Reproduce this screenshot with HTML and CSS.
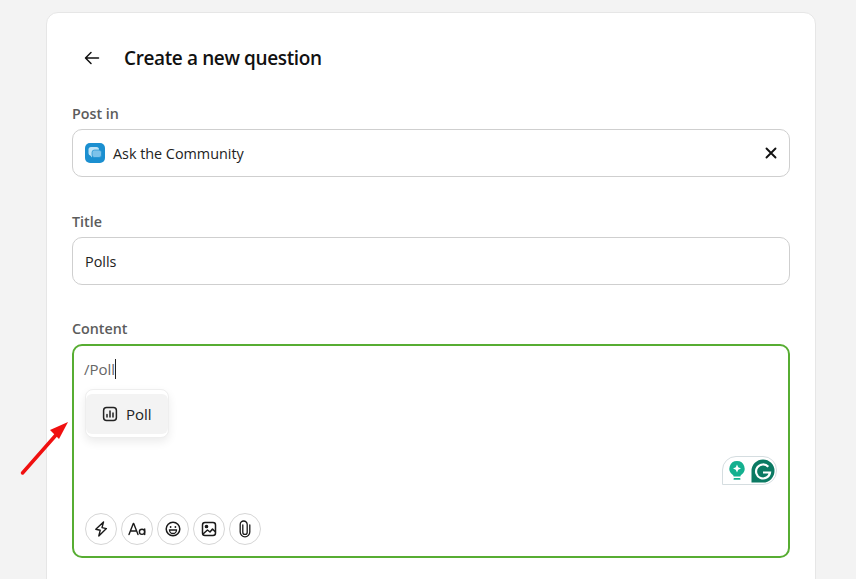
FILE: index.html
```html
<!DOCTYPE html>
<html lang="en">
<head>
<meta charset="utf-8">
<title>Create a new question</title>
<link rel="stylesheet" href="styles.css">
</head>
<body>
<main class="card">
  <header class="head">
    <button class="back" aria-label="Back">
      <svg width="16" height="14" viewBox="0 0 16 14" fill="none" stroke="#111" stroke-width="1.5" stroke-linecap="round" stroke-linejoin="round"><path d="M14.5 7H1.8M7 1.5 1.5 7 7 12.5"/></svg>
    </button>
    <h1 class="title">Create a new question</h1>
  </header>

  <section class="field field-post">
    <div class="label">Post in</div>
    <div class="input">
      <svg class="space-icon" width="20" height="20" viewBox="0 0 20 20">
        <rect width="20" height="20" rx="5" fill="#1b8fd0"/>
        <rect x="3.5" y="4" width="10.5" height="8.5" rx="2.5" fill="#bfe3f6"/>
        <path d="M5 12h2v2.5z" fill="#bfe3f6"/>
        <rect x="7" y="7" width="9.5" height="7.5" rx="2.5" fill="#7cc2ea" stroke="#1b8fd0" stroke-width=".7"/>
      </svg>
      <span class="value">Ask the Community</span>
      <svg class="clear" width="12" height="12" viewBox="0 0 12 12" fill="none" stroke="#111" stroke-width="1.9" stroke-linecap="round"><path d="M1.5 1.500l9 9M10.500 1.500l-9 9"/></svg>
    </div>
  </section>

  <section class="field field-title">
    <div class="label">Title</div>
    <div class="input"><span class="value">Polls</span></div>
  </section>

  <section class="field field-content">
    <div class="label">Content</div>
    <div class="editor">
      <div class="typed">/Poll<span class="caret"></span></div>
      <div class="menu">
        <div class="menu-item">
          <svg width="16" height="16" viewBox="0 0 16 16" fill="none" stroke="#222" stroke-width="1.5" stroke-linecap="round"><rect x="1.600" y="1.600" width="12.800" height="12.800" rx="3"/><path d="M5 11V8.500M8 11V5M11 11V7"/></svg>
          <span>Poll</span>
        </div>
      </div>
      <div class="grammarly">
        <svg width="18" height="21" viewBox="0 0 18 21"><path d="M9 1a7.600 7.600 0 0 0-4.400 13.800c.7.500 1 1 1 1.700h6.800c0-.7.300-1.200 1-1.700A7.600 7.600 0 0 0 9 1z" fill="#14b08f"/><path d="M9 4.500l1.200 2.800 2.800 1.200-2.800 1.200L9 12.500l-1.200-2.800L5 8.500l2.800-1.200z" fill="#fff"/><rect x="5.500" y="18" width="7" height="1.800" rx=".9" fill="#14b08f"/></svg>
        <svg width="24" height="24" viewBox="0 0 24 24"><path d="M12 .5a11.500 11.500 0 0 1 0 23H.5V12A11.500 11.500 0 0 1 12 .5z" fill="#0b7a63"/><path d="M17.300 7.800A7 7 0 1 0 19 13.500h-7" fill="none" stroke="#fff" stroke-width="2.200"/></svg>
      </div>
      <div class="tools">
        <button class="tool" aria-label="Quick actions"><svg width="16" height="16" viewBox="0 0 16 16" fill="none" stroke="#1a1a1a" stroke-width="1.400" stroke-linejoin="round"><path d="M10.500 1 2.800 8.300l4.400 1L5.800 15l7.600-7.400-4.400-1z"/></svg></button>
        <button class="tool" aria-label="Text format"><svg width="18" height="14" viewBox="0 0 18 14" fill="none" stroke="#1a1a1a" stroke-width="1.400" stroke-linecap="round" stroke-linejoin="round"><path d="M1 12.500 5.300 1.500h.4L10 12.500M2.500 9h6"/><circle cx="14" cy="9.800" r="2.600"/><path d="M16.700 7v5.500"/></svg></button>
        <button class="tool" aria-label="Emoji"><svg width="16" height="16" viewBox="0 0 16 16" fill="none" stroke="#1a1a1a" stroke-width="1.500"><circle cx="8" cy="8" r="6.800"/><circle cx="5.600" cy="6" r=".9" fill="#1a1a1a" stroke="none"/><circle cx="10.400" cy="6" r=".9" fill="#1a1a1a" stroke="none"/><path d="M4.500 9h7a3.500 3.500 0 0 1-7 0z" stroke-width="1.300"/></svg></button>
        <button class="tool" aria-label="Image"><svg width="16" height="16" viewBox="0 0 16 16" fill="none" stroke="#1a1a1a" stroke-width="1.500" stroke-linejoin="round"><rect x="1.500" y="1.500" width="13" height="13" rx="2.500"/><circle cx="5.500" cy="5.500" r="1.100" fill="#1a1a1a"/><path d="M2 13l4.500-4 2.500 2 2.500-3 3 3"/></svg></button>
        <button class="tool" aria-label="Attach"><svg width="14" height="18" viewBox="0 0 14 18" fill="none" stroke="#1a1a1a" stroke-width="1.300" stroke-linecap="round"><path d="M4.800 5v7.200a2.200 2.200 0 0 0 4.400 0V4.500a3.500 3.500 0 0 0-7 0V12a4.800 4.800 0 0 0 9.600 0V5"/></svg></button>
      </div>
    </div>
  </section>
</main>
<svg class="annot" width="50" height="56" viewBox="0 0 50 56"><path d="M2.500 53 36 15" stroke="#f01010" stroke-width="3.500" stroke-linecap="round"/><path d="M48 2 30 10l9 9z" fill="#f01010"/></svg>
</body>
</html>
```
FILE: styles.css
```css
html, body {
  margin: 0;
  height: 579px;
  overflow: hidden;
  background: #f3f3f3;
}
body {
  font-family: "Open Sans", "Noto Sans", sans-serif;
  color: #1a1a1a;
  padding: 12px 0 0 46px;
  box-sizing: border-box;
  position: relative;
}
.card {
  width: 770px;
  box-sizing: border-box;
  background: #fff;
  border: 1px solid #e6e6e6;
  border-radius: 12px;
  padding: 24px 25px 40px 25px;
}
.head {
  display: flex;
  align-items: center;
  height: 42px;
  gap: 24px;
  padding-left: 12px;
}
.back {
  border: 0;
  background: none;
  padding: 0;
  width: 16px;
  height: 14px;
  display: flex;
}
.title {
  margin: 0;
  font-size: 19px;
  font-weight: 600;
  color: #111;
  letter-spacing: -0.38px;
}
.field-post { margin-top: 25px; }
.field-title { margin-top: 35px; }
.field-content { margin-top: 34px; }
.label {
  font-size: 14.300px;
  font-weight: 600;
  line-height: 20px;
  color: #5c5c5c;
  margin-bottom: 5px;
}
.input {
  height: 48px;
  box-sizing: border-box;
  border: 1px solid #cfcfcf;
  border-radius: 10px;
  display: flex;
  align-items: center;
  padding: 0 12px;
  gap: 8px;
}
.value { font-size: 14.400px; color: #222; flex: 1; letter-spacing: -0.02px; }
.editor {
  position: relative;
  height: 214px;
  box-sizing: border-box;
  border: 2px solid #57ad32;
  border-radius: 10px;
  padding: 13px 10px 11px 10px;
  display: flex;
  flex-direction: column;
  justify-content: space-between;
}
.typed {
  font-size: 15px;
  line-height: 20px;
  color: #666;
  display: flex;
  align-items: center;
}
.caret {
  width: 1px;
  height: 20px;
  background: #222;
}
.menu {
  position: absolute;
  left: 11px;
  top: 43px;
  width: 84px;
  height: 49px;
  box-sizing: border-box;
  background: #fff;
  border: 1px solid #eee;
  border-radius: 8px;
  box-shadow: 0 4px 10px rgba(0,0,0,.08);
  padding: 4px 0;
}
.menu-item {
  height: 40px;
  background: #f3f3f3;
  border-radius: 6px;
  display: flex;
  align-items: center;
  gap: 8px;
  padding-left: 16px;
  font-size: 15px;
  color: #222;
}
.grammarly {
  position: absolute;
  right: 11px;
  top: 110px;
  width: 55px;
  height: 29px;
  box-sizing: border-box;
  border: 1px solid #d5dde0;
  border-radius: 14px 14px 14px 0;
  display: flex;
  align-items: center;
  gap: 5px;
  padding-left: 5px;
}
.tools { display: flex; gap: 4px; padding-left: 1px; }
.tool {
  width: 32px;
  height: 32px;
  border: 1px solid #d6d6d6;
  border-radius: 50%;
  background: #fff;
  padding: 0;
  display: flex;
  align-items: center;
  justify-content: center;
}
.annot {
  position: absolute;
  left: 20px;
  top: 420px;
}
```
